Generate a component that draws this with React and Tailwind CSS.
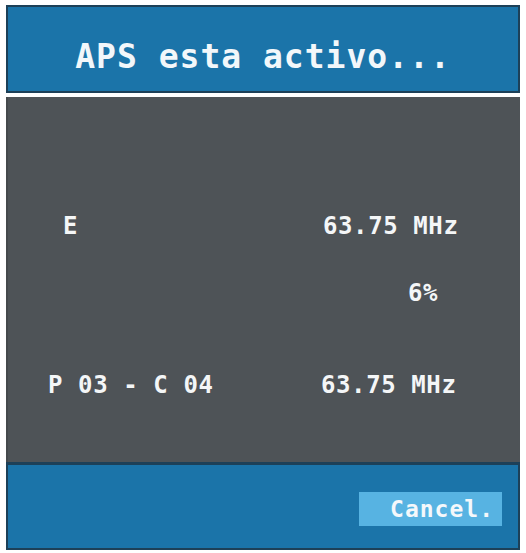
export default function App() {
  const mono = { fontFamily: '"DejaVu Sans Mono", "Liberation Mono", monospace' };
  return (
    <div className="w-[526px] h-[553px] bg-white pt-[5px] px-[6px] flex flex-col" style={mono}>
      <div className="h-[88px] w-[514px] bg-[#1b74a9] border-2 border-[#1d4058] flex items-center justify-center pt-[14px]">
        <span className="text-[33px] leading-none font-bold text-[#f2f7fa] tracking-[1px]">APS esta activo...</span>
      </div>
      <div className="h-[4px]" />
      <div className="h-[365px] w-[514px] bg-[#4e5357] border-l-2 border-[#45494c] flex flex-col text-[24px] font-bold text-[#f4f6f7] tracking-[0.6px]">
        <div className="h-[30px] mt-[114px] flex items-center">
          <span className="w-[315px] pl-[55px]">E</span>
          <span>63.75 MHz</span>
        </div>
        <div className="h-[30px] mt-[37px] flex items-center">
          <span className="w-[400px]"></span>
          <span>6%</span>
        </div>
        <div className="h-[30px] mt-[62px] flex items-center">
          <span className="w-[313px] pl-[40px]">P 03 - C 04</span>
          <span>63.75 MHz</span>
        </div>
      </div>
      <div className="h-[88px] w-[514px] bg-[#1b74a9] border-2 border-t-[3px] border-[#1d4058] flex items-start justify-end pt-[27px] pr-[16px]">
        <div className="w-[143px] h-[34px] bg-[#57b3e2] flex items-center justify-end pr-[8px]">
          <span className="text-[23px] font-bold text-[#f4f8fb] tracking-[1px] leading-none">Cancel.</span>
        </div>
      </div>
    </div>
  );
}
